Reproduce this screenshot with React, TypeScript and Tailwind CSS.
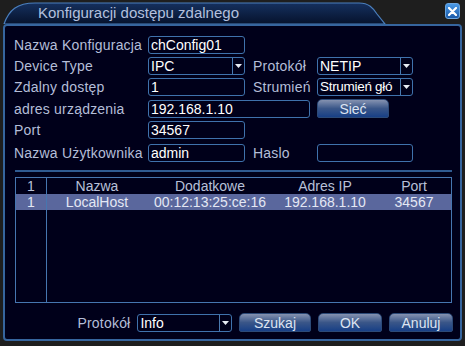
import React from "react";

const font = { fontFamily: '"Liberation Sans", Arial, sans-serif' };

function Arrow() {
  return (
    <div className="w-[12px] h-full border-l border-[#4a7ab0] flex items-center justify-center">
      <svg width="7" height="4" viewBox="0 0 7 4">
        <path d="M0 0 L7 0 L3.5 4 Z" fill="#e8ecf4" />
      </svg>
    </div>
  );
}

function Field({ w, value, select, tight }: { w: string; value?: string; select?: boolean; tight?: boolean }) {
  return (
    <div
      className={`${w} h-[18px] border border-[#3f72ac] rounded-[3px] bg-[#00001a] flex items-center overflow-hidden`}
    >
      <div
        className={`flex-1 pl-[2px] leading-none text-white whitespace-nowrap ${
          tight ? "text-[13.5px] tracking-[-0.3px]" : "text-[14px]"
        }`}
      >
        {value}
      </div>
      {select && <Arrow />}
    </div>
  );
}

function Btn({ w, label }: { w: string; label: string }) {
  return (
    <div
      className={`${w} h-[19px] rounded-t-[5px] rounded-b-[2px] border border-[#2c4a78] bg-gradient-to-b from-[#8592b0] via-[#3a5688] to-[#173f86] flex items-center justify-center text-[14px] leading-none text-[#dde4f2]`}
    >
      {label}
    </div>
  );
}

function Label({ w, children }: { w: string; children: React.ReactNode }) {
  return <div className={`${w} text-[14px] tracking-[0.2px] leading-none text-[#b4bed8] whitespace-nowrap`}>{children}</div>;
}

export default function App() {
  return (
    <div className="w-[465px] h-[346px] bg-[#1e1e1e] flex flex-col" style={font}>
      {/* title bar */}
      <div className="h-[24px] flex items-end relative">
        <div className="relative w-[390px] h-[22px] ml-[3px]">
          <svg className="absolute inset-0" width="390" height="22" viewBox="0 0 390 22">
            <defs>
              <linearGradient id="tg" x1="0" y1="0" x2="0" y2="1">
                <stop offset="0" stopColor="#15305e" />
                <stop offset="1" stopColor="#06122c" />
              </linearGradient>
            </defs>
            <path d="M1 22 C 6 8, 14 1, 32 1 L 356 1 C 366 1, 370 6, 374 12 L 382 22 Z" fill="url(#tg)" stroke="#4a7ebc" strokeWidth="1.2" />
          </svg>
          <div className="absolute left-[35px] top-[2px] text-[15px] leading-[18px] text-[#b3c0de] whitespace-nowrap">
            Konfiguracji dostępu zdalnego
          </div>
        </div>
        <div className="absolute right-[5px] top-[3px] w-[15px] h-[16px] rounded-[3px] border border-[#6aa6e0] bg-gradient-to-b from-[#4a9ae8] to-[#1a5aa8] flex items-center justify-center">
          <svg width="9" height="9" viewBox="0 0 9 9">
            <path d="M1 1 L8 8 M8 1 L1 8" stroke="#ffffff" strokeWidth="2.2" strokeLinecap="round" />
          </svg>
        </div>
      </div>

      {/* main panel */}
      <div className="mx-[3px] mb-[5px] flex-1 border-2 border-[#36659e] rounded-[4px] bg-[#00001a] flex flex-col pl-[9px] pr-[7px] pt-[10px]">
        <div className="flex flex-col gap-[3px]">
          <div className="flex items-center">
            <Label w="w-[134px]">Nazwa Konfiguracja</Label>
            <Field w="w-[97px]" value="chConfig01" />
          </div>
          <div className="flex items-center">
            <Label w="w-[134px]">Device Type</Label>
            <Field w="w-[97px]" value="IPC" select />
            <Label w="w-[64px] ml-[8px]">Protokół</Label>
            <Field w="w-[96px]" value="NETIP" select />
          </div>
          <div className="flex items-center">
            <Label w="w-[134px]">Zdalny dostęp</Label>
            <Field w="w-[97px]" value="1" />
            <Label w="w-[64px] ml-[8px]">Strumień</Label>
            <Field w="w-[96px]" value="Strumień głó" select tight />
          </div>
          <div className="flex items-center">
            <Label w="w-[134px]">adres urządzenia</Label>
            <Field w="w-[162px]" value="192.168.1.10" />
            <div className="ml-[7px]">
              <Btn w="w-[72px]" label="Sieć" />
            </div>
          </div>
          <div className="flex items-center">
            <Label w="w-[134px]">Port</Label>
            <Field w="w-[97px]" value="34567" />
          </div>
          <div className="flex items-center mt-[2px]">
            <Label w="w-[134px]">Nazwa Użytkownika</Label>
            <Field w="w-[97px]" value="admin" />
            <Label w="w-[64px] ml-[8px]">Haslo</Label>
            <Field w="w-[96px]" value="" />
          </div>
        </div>

        <div className="mt-[8px] ml-[1px] w-[437px] h-[2px] bg-[#2f5b92]" />

        {/* table */}
        <div className="mt-[5px] ml-[1px] w-[437px] h-[126px] border border-[#4676b0] flex flex-col text-[14px] leading-none">
          <div className="h-[16px] flex items-center text-[#b8c0d8]">
            <div className="w-[31px] text-center border-r border-[#4676b0] h-full flex items-center justify-center">1</div>
            <div className="w-[100px] text-center">Nazwa</div>
            <div className="w-[126px] text-center">Dodatkowe</div>
            <div className="w-[104px] text-center">Adres IP</div>
            <div className="w-[74px] text-center">Port</div>
          </div>
          <div className="h-[16px] flex items-center bg-[#5a679d] text-[#e4e8f4]">
            <div className="w-[31px] text-center border-r border-[#4676b0] h-full flex items-center justify-center">1</div>
            <div className="w-[100px] text-center">LocalHost</div>
            <div className="w-[126px] text-center">00:12:13:25:ce:16</div>
            <div className="w-[104px] text-center">192.168.1.10</div>
            <div className="w-[74px] text-center">34567</div>
          </div>
          <div className="flex-1 flex">
            <div className="w-[31px] border-r border-[#4676b0]" />
          </div>
        </div>

        {/* bottom */}
        <div className="mt-[10px] flex items-center">
          <Label w="w-[124px] text-right pr-[7px]">Protokół</Label>
          <Field w="w-[95px]" value="Info" select />
          <div className="ml-[7px] flex gap-[7px]">
            <Btn w="w-[72px]" label="Szukaj" />
            <Btn w="w-[64px]" label="OK" />
            <Btn w="w-[64px]" label="Anuluj" />
          </div>
        </div>
      </div>
    </div>
  );
}
